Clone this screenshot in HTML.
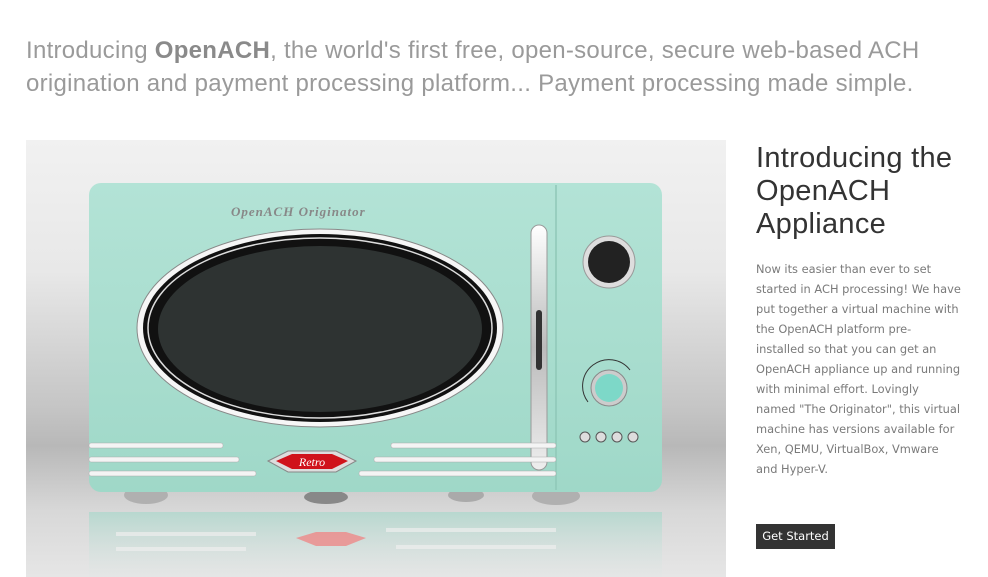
<!DOCTYPE html>
<html><head><meta charset="utf-8"><style>
*{margin:0;padding:0;box-sizing:border-box}
body{width:988px;height:577px;overflow:hidden;background:#fff;font-family:"Liberation Sans",sans-serif;position:relative}
.intro{position:absolute;left:26px;top:34px;color:#9a9a9a;font-size:24px;line-height:33px;white-space:nowrap;letter-spacing:0.28px}
.intro b{font-weight:bold;color:#8a8a8a}
h2{position:absolute;left:756px;top:142px;font-weight:normal;font-size:29px;line-height:33px;color:#333;letter-spacing:0.3px}
p{position:absolute;left:756px;top:259px;white-space:nowrap;font-family:"DejaVu Sans",sans-serif;font-size:11.4px;line-height:20px;color:#7a7a7a}
.btn{position:absolute;left:756px;top:524px;width:79px;height:25px;background:#333;color:#fff;font-size:11.5px;line-height:25px;text-align:center;font-family:"DejaVu Sans",sans-serif}
.img{position:absolute;left:26px;top:140px;width:700px;height:437px;overflow:hidden;background:linear-gradient(#f1f1f1 0%,#e8e8e8 30%,#c4c4c4 62%,#b8b8b8 70%,#d8d8d8 85%,#e6e6e6 100%)}
</style></head><body>
<div class="intro">Introducing <b>OpenACH</b>, the world's first free, open-source, secure web-based ACH<br>origination and payment processing platform... Payment processing made simple.</div>
<div class="img">
<svg width="700" height="437" viewBox="0 0 700 437">
<defs>
<linearGradient id="body" x1="0" y1="0" x2="0" y2="1"><stop offset="0" stop-color="#b3e3d6"/><stop offset="1" stop-color="#9fd8c8"/></linearGradient>
<linearGradient id="chrome" x1="0" y1="0" x2="0" y2="1"><stop offset="0" stop-color="#fff"/><stop offset="0.5" stop-color="#bbb"/><stop offset="1" stop-color="#eee"/></linearGradient>
<linearGradient id="refl" x1="0" y1="0" x2="0" y2="1"><stop offset="0" stop-color="#a9d8cb" stop-opacity="0.7"/><stop offset="1" stop-color="#d8e8e4" stop-opacity="0.1"/></linearGradient>
</defs>
<rect x="63" y="372" width="573" height="65" fill="url(#refl)"/>
<rect x="90" y="392" width="140" height="4" fill="#eee" opacity=".7"/>
<rect x="90" y="407" width="130" height="4" fill="#eee" opacity=".7"/>
<rect x="360" y="388" width="170" height="4" fill="#eee" opacity=".7"/>
<rect x="370" y="405" width="160" height="4" fill="#eee" opacity=".7"/>
<path d="M270 398 L290 392 L320 392 L340 398 L320 406 L290 406Z" fill="#e88" opacity=".8"/>
<ellipse cx="120" cy="355" rx="22" ry="9" fill="#b0b0b0"/>
<ellipse cx="300" cy="357" rx="22" ry="7" fill="#888"/>
<ellipse cx="440" cy="355" rx="18" ry="7" fill="#aaa"/>
<ellipse cx="530" cy="356" rx="24" ry="9" fill="#b0b0b0"/>
<rect x="63" y="43" width="573" height="309" rx="12" fill="url(#body)"/>
<line x1="530" y1="45" x2="530" y2="350" stroke="#8fc8b8" stroke-width="1.5"/>
<text x="205" y="76" font-family="Liberation Serif,serif" font-style="italic" font-weight="bold" font-size="13" fill="#888" letter-spacing="1">OpenACH Originator</text>
<ellipse cx="294" cy="188" rx="183" ry="99" fill="#f6f6f6" stroke="#888" stroke-width="1"/>
<ellipse cx="294" cy="188" rx="177" ry="94" fill="#111"/>
<ellipse cx="294" cy="188" rx="172" ry="90" fill="none" stroke="#ddd" stroke-width="1.5"/>
<ellipse cx="294" cy="189" rx="162" ry="83" fill="#2e3332"/>
<rect x="505" y="85" width="16" height="245" rx="8" fill="url(#chrome)" stroke="#999"/>
<rect x="510" y="170" width="6" height="60" rx="3" fill="#333"/>
<circle cx="583" cy="122" r="26" fill="#ddd" stroke="#999"/>
<circle cx="583" cy="122" r="21" fill="#222"/>
<circle cx="583" cy="248" r="18" fill="#ccc" stroke="#888"/>
<circle cx="583" cy="248" r="14" fill="#7dd8c8"/>
<path d="M562 262 A24 24 0 0 1 604 230" fill="none" stroke="#333" stroke-width="1"/>
<g fill="#ddd" stroke="#555"><circle cx="559" cy="297" r="5"/><circle cx="575" cy="297" r="5"/><circle cx="591" cy="297" r="5"/><circle cx="607" cy="297" r="5"/></g>
<g fill="#f4f4f4" stroke="#aaa" stroke-width=".5">
<rect x="63" y="303" width="134" height="5" rx="2"/>
<rect x="63" y="317" width="150" height="5" rx="2"/>
<rect x="63" y="331" width="167" height="5" rx="2"/>
<rect x="365" y="303" width="165" height="5" rx="2"/>
<rect x="348" y="317" width="182" height="5" rx="2"/>
<rect x="333" y="331" width="197" height="5" rx="2"/>
</g>
<path d="M242 321 L262 311 L310 311 L330 321 L310 332 L262 332Z" fill="#ddd" stroke="#888"/>
<path d="M250 321 L266 314 L306 314 L322 321 L306 329 L266 329Z" fill="#d0121b"/>
<text x="286" y="326" text-anchor="middle" font-family="Liberation Serif,serif" font-style="italic" font-size="12" fill="#fff">Retro</text>
</svg>
</div>
<h2>Introducing the<br>OpenACH<br>Appliance</h2>
<p>Now its easier than ever to set<br>started in ACH processing! We have<br>put together a virtual machine with<br>the OpenACH platform pre-<br>installed so that you can get an<br>OpenACH appliance up and running<br>with minimal effort. Lovingly<br>named "The Originator", this virtual<br>machine has versions available for<br>Xen, QEMU, VirtualBox, Vmware<br>and Hyper-V.</p>
<div class="btn">Get Started</div>
</body></html>
